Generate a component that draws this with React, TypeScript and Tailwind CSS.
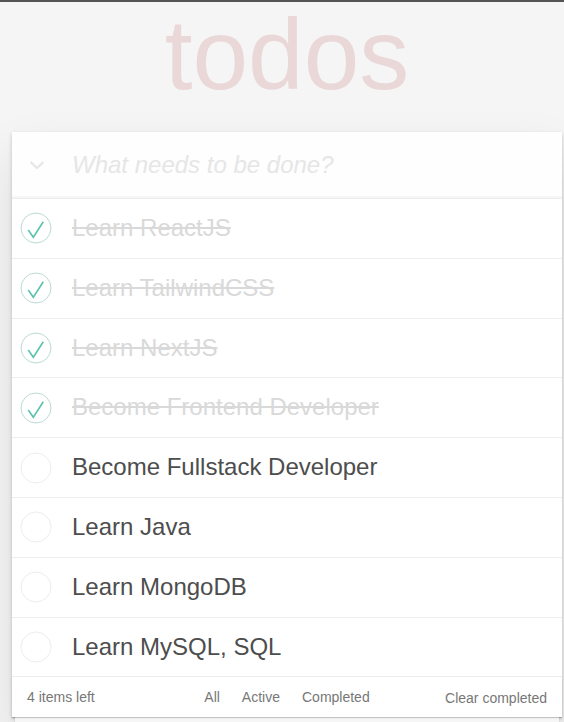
import React from "react";

type Todo = { title: string; done: boolean };

const todos: Todo[] = [
  { title: "Learn ReactJS", done: true },
  { title: "Learn TailwindCSS", done: true },
  { title: "Learn NextJS", done: true },
  { title: "Become Frontend Developer", done: true },
  { title: "Become Fullstack Developer", done: false },
  { title: "Learn Java", done: false },
  { title: "Learn MongoDB", done: false },
  { title: "Learn MySQL, SQL", done: false },
];

const font = { fontFamily: "'Liberation Sans', Arial, sans-serif" };

function Toggle({ done }: { done: boolean }) {
  return (
    <svg width="32" height="32" viewBox="0 0 32 32" className="shrink-0 ml-[8px]">
      <circle cx="16" cy="16" r="15" fill="none" stroke={done ? "#bddad5" : "#ededed"} strokeWidth="1" />
      {done && (
        <path d="M8.3 18 L13.3 25.3 L23.3 9.7" fill="none" stroke="#5dc2af" strokeWidth="1.6" />
      )}
    </svg>
  );
}

export default function App() {
  const left = todos.filter((t) => !t.done).length;

  return (
    <div className="min-h-screen bg-[#f5f5f5] text-[#4d4d4d]" style={font}>
      {/* browser chrome line */}
      <div className="h-[2px] bg-[#555]" />

      <div className="ml-[12px] w-[550px]">
        <h1 className="-mt-[4px] text-center text-[100px] leading-[112px] font-thin text-[rgba(175,47,47,0.15)]">
          todos
        </h1>

        <section className="mt-[22px] bg-white shadow-[0_2px_4px_0_rgba(0,0,0,0.2),0_25px_50px_0_rgba(0,0,0,0.1)]">
          {/* New todo */}
          <div className="flex items-center h-[67px] border-b border-[#ededed] bg-[#fefefe] shadow-[inset_0_-2px_1px_rgba(0,0,0,0.03)]">
            <div className="w-[50px] flex justify-center">
              <svg width="16" height="10" viewBox="0 0 16 10">
                <path d="M1.5 2 L8 8 L14.5 2" fill="none" stroke="#e6e6e6" strokeWidth="2.2" />
              </svg>
            </div>
            <span className="ml-[10px] text-[24px] italic text-[#e6e6e6]">What needs to be done?</span>
          </div>

          {/* List */}
          <ul>
            {todos.map((t) => (
              <li key={t.title} className="flex items-center h-[59.8px] border-b border-[#ededed]">
                <Toggle done={t.done} />
                <span
                  className={
                    "ml-[20px] text-[24px] leading-[28.8px] " +
                    (t.done ? "line-through text-[#d9d9d9]" : "text-[#4d4d4d]")
                  }
                >
                  {t.title}
                </span>
              </li>
            ))}
          </ul>

          {/* Footer */}
          <footer className="grid grid-cols-[1fr_auto_1fr] items-center h-[40px] px-[15px] text-[14px] text-[#777] shadow-[0_1px_1px_rgba(0,0,0,0.2),0_8px_0_-3px_#f6f6f6,0_9px_1px_-3px_rgba(0,0,0,0.2)]">
            <span>{left} items left</span>
            <div className="flex">
              {["All", "Active", "Completed"].map((f) => (
                <span key={f} className="mx-[3px] px-[8px] py-[3px]">
                  {f}
                </span>
              ))}
            </div>
            <span className="text-right pt-[2px]">Clear completed</span>
          </footer>
        </section>
      </div>
    </div>
  );
}
